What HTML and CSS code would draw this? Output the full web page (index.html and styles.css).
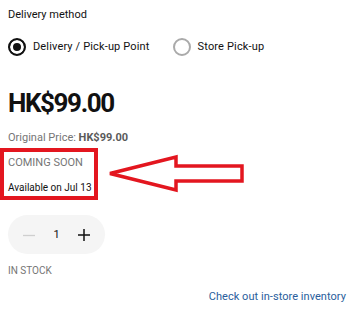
FILE: index.html
```html
<!DOCTYPE html>
<html>
<head>
<meta charset="utf-8">
<link rel="stylesheet" href="styles.css">
</head>
<body>
<div class="page">
  <div class="label">Delivery method</div>
  <div class="radios">
    <label class="radio"><span class="dot selected"></span><span>Delivery / Pick-up Point</span></label>
    <label class="radio"><span class="dot"></span><span>Store Pick-up</span></label>
  </div>
  <div class="price">HK$99.00</div>
  <div class="orig">Original Price: <b>HK$99.00</b></div>
  <div class="soon">COMING SOON</div>
  <div class="avail">Available on Jul 13</div>
  <div class="qty">
    <svg class="minus" width="12" height="12" viewBox="0 0 12 12"><path d="M0 6.5H12" stroke="#cfcfcf" stroke-width="1.3"/></svg>
    <span class="num">1</span>
    <svg class="plus" width="12" height="12" viewBox="0 0 12 12"><path d="M0 6H12M6 0V12" stroke="#111" stroke-width="1.5"/></svg>
  </div>
  <div class="stock">IN STOCK</div>
  <div class="link-row"><a class="link">Check out in-store inventory</a></div>

  <div class="hl-box"></div>
  <svg class="hl-arrow" width="150" height="46" viewBox="0 0 150 46">
    <polygon points="10,23.5 76,7 76,16 142,16 142,31 76,31 76,40" fill="none" stroke="#e3161f" stroke-width="3.5" stroke-linejoin="miter"/>
  </svg>
</div>
</body>
</html>
```
FILE: styles.css
```css
html, body {
  margin: 0;
  padding: 0;
  background: #fff;
}
.page {
  position: relative;
  width: 357px;
  height: 309px;
  box-sizing: border-box;
  padding: 8px;
  font-family: Roboto, "Liberation Sans", sans-serif;
  font-size: 11px;
  line-height: 14px;
  color: #111;
  overflow: hidden;
}
.label {
  height: 14px;
}
.radios {
  display: flex;
  margin-top: 16px;
  gap: 23px;
  letter-spacing: 0.15px;
}
.radio {
  display: flex;
  align-items: center;
  gap: 7px;
  height: 18px;
}
.dot {
  width: 18px;
  height: 18px;
  box-sizing: border-box;
  border-radius: 50%;
  border: 2px solid #aaa;
  background: #fff;
}
.dot.selected {
  border-color: #111;
  background: #111;
  box-shadow: inset 0 0 0 3px #fff;
}
.price {
  margin-top: 32px;
  font-size: 26px;
  line-height: 30px;
  font-weight: 700;
  letter-spacing: -1.4px;
}
.orig {
  margin-top: 13px;
  color: #757575;
}
.orig b {
  color: #5a5a5a;
}
.soon {
  margin-top: 11px;
  color: #757575;
}
.avail {
  margin-top: 11px;
  font-size: 10px;
}
.qty {
  margin-top: 20px;
  width: 97px;
  height: 39px;
  box-sizing: border-box;
  padding: 0 15px;
  border-radius: 20px;
  background: #f5f5f5;
  display: flex;
  align-items: center;
  justify-content: space-between;
}
.num {
  font-size: 11px;
}
.stock {
  margin-top: 10px;
  font-size: 10px;
  color: #757575;
}
.link-row {
  margin-top: 12px;
  padding-right: 3px;
  display: flex;
  justify-content: flex-end;
}
.link {
  color: #2a5e9c;
  letter-spacing: 0.05px;
}
.hl-box {
  position: absolute;
  left: 0;
  top: 148px;
  width: 98px;
  height: 52px;
  box-sizing: border-box;
  border: 4px solid #e3161f;
}
.hl-arrow {
  position: absolute;
  left: 100px;
  top: 150px;
}
```
